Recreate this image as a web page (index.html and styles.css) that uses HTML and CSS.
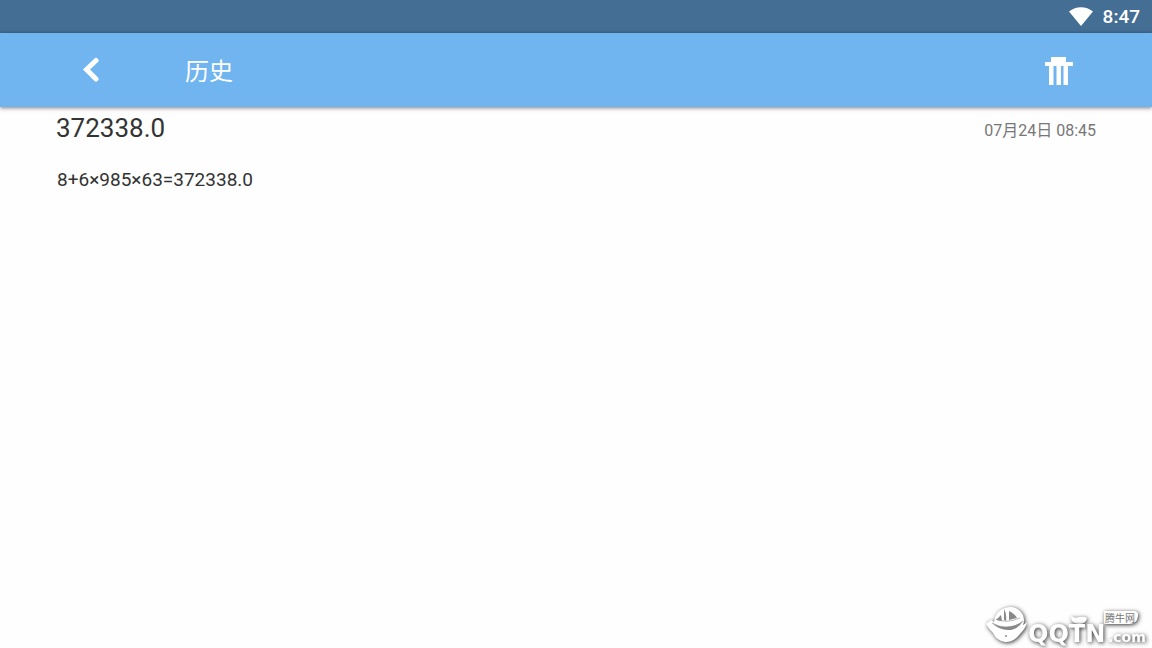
FILE: index.html
```
<!DOCTYPE html>
<html lang="zh-CN">
<head>
<meta charset="utf-8">
<meta name="viewport" content="width=device-width, initial-scale=1">
<title>历史</title>
<link rel="stylesheet" href="styles.css">
</head>
<body>
<div class="status-bar">
  <svg class="wifi" viewBox="0 0 24 19" aria-hidden="true"><path d="M0 4.500C7-1.200 17-1.200 24 4.500L12 19Z"/></svg>
  <span class="clock">8:47</span>
</div>
<header class="app-bar">
  <button class="icon-button" type="button" aria-label="返回">
    <svg class="back-icon" viewBox="0 0 22 26" aria-hidden="true"><path d="M14 3.500 4.500 12.500l9.500 9.500"/></svg>
  </button>
  <h1 class="title">历史</h1>
  <button class="icon-button" type="button" aria-label="清空">
    <svg class="trash-icon" viewBox="0 0 28 32" aria-hidden="true"><path d="M6 3h15v5h7v4h-5v19h-4.500V12H16v19h-4.500V12H8.500v19H4V12H0V8h6Z"/></svg>
  </button>
</header>
<main class="history">
  <article class="entry">
    <div class="entry-head">
      <h2 class="result">372338.0</h2>
      <time class="date">07月24日 08:45</time>
    </div>
    <p class="formula">8+6×985×63=372338.0</p>
  </article>
</main>
<svg class="watermark" viewBox="0 0 168 48" role="img" aria-label="QQTN.com 腾牛网">
  <g class="mark">
    <path d="M2 24l5-4 3 2Q11 11 21 8q9-3 15 3 6 6 3 14 2-1 4-3-1 6-7 12-7 9-15 8-8-1-12-9Q5 29 2 24Z"/>
    <path d="M120 11h29q6 0 5 5-1 8-9 8h-25Z"/>
    <path d="M87 16q4 3 8 1 5-1 8 1-1 6-8 6-8 0-8-8Z"/>
  </g>
  <path class="line" d="M8 23q7 4 14 4 10 0 17-6M12 19q10 5 24-1"/>
  <path class="shade" d="M20 9q3 5 2 12l-2-1ZM17 15l-5 5 6 1ZM25 11q6 3 8 7l-8 2ZM8 23q7 4 14 4 10 0 17-6-5 9-15 9-9 0-16-7Z"/>
  <circle class="shade" cx="22" cy="36" r="1"/>
  <text class="brand" x="44" y="42">QQTN</text>
  <text class="domain" x="124" y="42">.com</text>
  <text class="brand-cn" x="121" y="22">腾牛网</text>
</svg>
</body>
</html>
```
FILE: styles.css
```
* {
  box-sizing: border-box;
}

body {
  margin: 0;
  background: #fefefe;
  color: #333;
  font-family: Roboto, "Noto Sans CJK SC", sans-serif;
}

h1, h2, p {
  margin: 0;
  font-weight: 400;
}

.status-bar {
  display: flex;
  align-items: center;
  justify-content: flex-end;
  gap: 10px;
  height: 33px;
  padding: 0 12px;
  background: #446e94;
  color: #fff;
}

.wifi {
  width: 24px;
  height: 19px;
  fill: #fff;
}

.clock {
  font-size: 19px;
  font-weight: 500;
  line-height: 34px;
}

.app-bar {
  display: flex;
  align-items: center;
  height: 74px;
  padding: 0 56px;
  background: #70b5f0;
  box-shadow: 0 1px 4px rgba(0, 0, 0, 0.5);
  color: #fff;
}

.icon-button {
  display: flex;
  align-items: center;
  justify-content: center;
  width: 74px;
  height: 74px;
  padding: 0;
  border: 0;
  background: none;
  cursor: pointer;
}

.back-icon {
  width: 22px;
  height: 26px;
  fill: none;
  stroke: #fff;
  stroke-linecap: round;
  stroke-width: 5;
}

.trash-icon {
  width: 28px;
  height: 32px;
  fill: #fff;
}

.title {
  flex: 1;
  padding: 4px 0 0 55px;
  font-size: 24px;
  line-height: 36px;
}

.history {
  padding: 4px 56px;
}

.entry-head {
  display: flex;
  align-items: center;
  justify-content: space-between;
}

.result {
  font-size: 26px;
  line-height: 34px;
}

.date {
  padding-top: 6px;
  color: #777;
  font-size: 16px;
  line-height: 24px;
}

.formula {
  padding: 22px 1px 0;
  font-size: 19px;
  line-height: 26px;
}

.watermark {
  position: absolute;
  right: 0;
  bottom: 0;
  width: 168px;
  height: 48px;
}

.mark,
.brand,
.domain {
  fill: #fff;
  filter: drop-shadow(1px 1px 2px rgba(0, 0, 0, 0.8));
}

.line {
  fill: none;
  stroke: #bbb;
  stroke-width: 1;
}

.shade {
  fill: #888;
}

.brand {
  font: 700 24px "DejaVu Sans", sans-serif;
}

.domain {
  font: 700 14px "DejaVu Sans", sans-serif;
}

.brand-cn {
  fill: #777;
  font: 10px "Noto Sans CJK SC", sans-serif;
}
```
